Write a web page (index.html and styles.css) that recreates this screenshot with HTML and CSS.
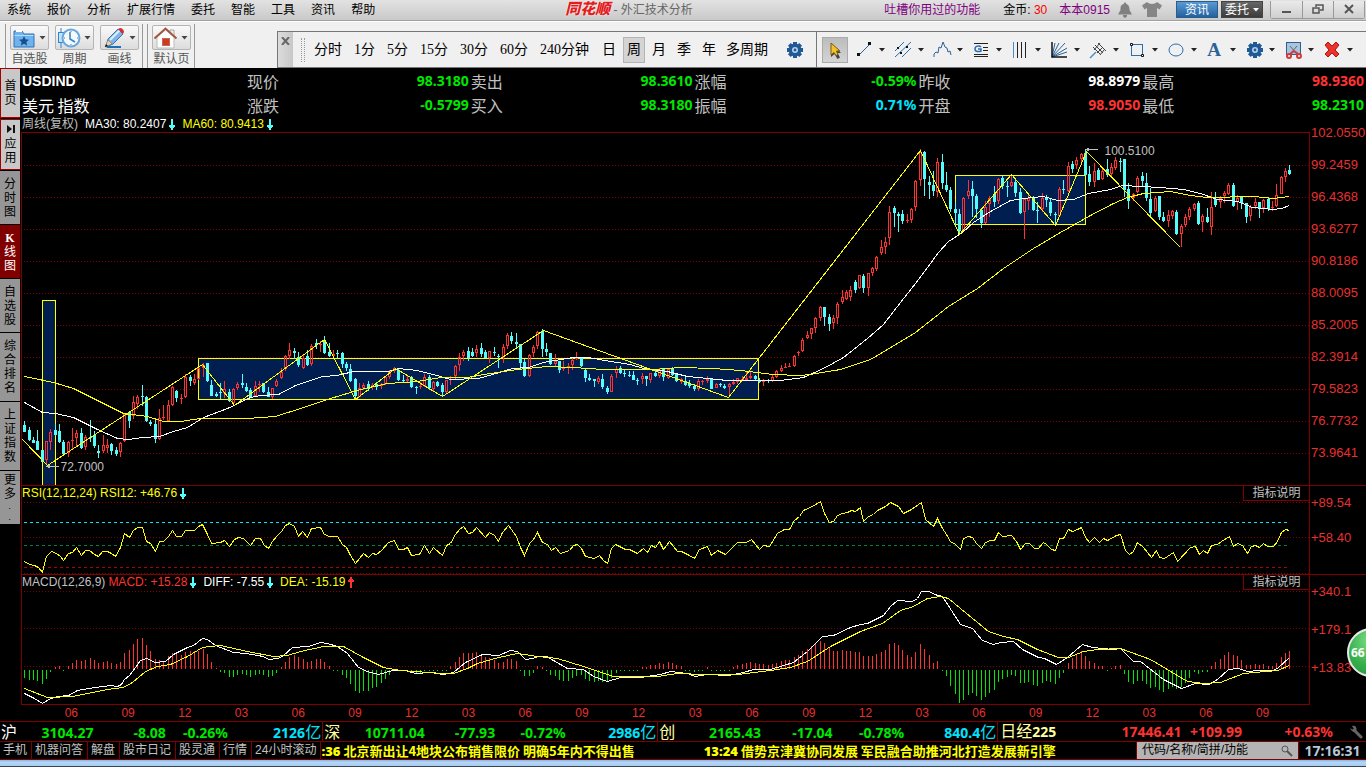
FILE: index.html
```
<!DOCTYPE html>
<html lang="zh-CN">

<head>
    <meta charset="UTF-8">
    <meta name="viewport" content="width=device-width, initial-scale=1.0">
    <title>同花顺 - 外汇技术分析</title>
    <link rel="stylesheet" href="styles.css">
</head>

<body>
    <!-- shared icon shapes -->
    <svg class="defs" width="0" height="0" aria-hidden="true">
        <symbol id="caret" viewBox="0 0 6 4"><path d="M0 0h6L3 3.6z" fill="currentColor" /></symbol>
        <symbol id="down" viewBox="0 0 6 11"><path d="M2 0h2v6h2v2H5v1H4v2H2V9H1V8H0V6h2z" fill="currentColor" /></symbol>
        <symbol id="up" viewBox="0 0 6 11"><path d="M2 11h2V5h2V3H5V2H4V0H2v2H1v1H0v2h2z" fill="currentColor" /></symbol>
        <symbol id="gear" viewBox="0 0 18 18">
            <g fill="#1f5a96">
                <circle cx="9" cy="9" r="6.4" />
                <path d="M7 1h4v16H7zM1 7h16v4H1z" />
                <path d="M7 1h4v16H7zM1 7h16v4H1z" transform="rotate(45 9 9)" />
            </g>
            <circle cx="9" cy="9" r="3" fill="#b9d2ea" />
            <circle cx="9" cy="9" r="1.4" fill="#1f5a96" />
        </symbol>
    </svg>

    <header class="titlebar">
        <nav class="menu">
            <a href="#">系统</a><a href="#">报价</a><a href="#">分析</a><a href="#">扩展行情</a><a href="#">委托</a><a href="#">智能</a><a href="#">工具</a><a href="#">资讯</a><a href="#">帮助</a>
        </nav>
        <div class="title"><span class="logo">同花顺</span> - 外汇技术分析</div>
        <div class="account">
            <a class="feedback" href="#">吐槽你用过的功能</a>
            <span class="coins">金币: <b>30</b></span>
            <a class="user" href="#">本本0915</a>
            <svg class="bell" viewBox="0 0 14 16" width="14" height="16">
                <path d="M7 0l1.500 2C11 3 11.500 5 11.500 8L14 12.500H0L2.500 8c0-3 0-5 3-6zM5 13h4v1.500L7 16l-2-1.500z" fill="#808080" />
            </svg>
            <svg class="shirt" viewBox="0 0 20 15" width="20" height="15">
                <path d="M5 0c2 2.500 8 2.500 10 0l5 3.500-2.500 4L15 6v9H5V6L2.500 7.500 0 3.500z" fill="#858585" />
            </svg>
        </div>
        <div class="quick">
            <button class="news-btn" type="button">资讯</button>
            <button class="trade-btn" type="button">委托<svg class="caret" width="6" height="4"><use href="#caret" /></svg></button>
        </div>
        <div class="window-btns">
            <button type="button" aria-label="最小化"><svg viewBox="0 0 12 10" width="12" height="10"><path d="M1 8h9" stroke="#555" stroke-width="2" /></svg></button>
            <button type="button" aria-label="还原"><svg viewBox="0 0 12 10" width="12" height="10"><path d="M4 3V1h7v5H8M1 4h6v5H1z" fill="none" stroke="#555" stroke-width="1.500" /></svg></button>
            <button type="button" aria-label="关闭"><svg viewBox="0 0 12 10" width="12" height="10"><path d="M2 1l8 8M10 1L2 9" stroke="#555" stroke-width="2" /></svg></button>
        </div>
    </header>

    <div class="toolbar">
        <div class="tool-group">
            <button class="big-tool" type="button">
                <span class="face"><svg viewBox="0 0 25 24" width="25" height="24">
                        <path d="M3 5h8l2 3h10v13H3z" fill="#6fb2ee" stroke="#2f74b8" />
                        <path d="M5 4h6v2H5z" fill="#fff" />
                        <path d="M3.500 9.500h19" stroke="#b5dafa" />
                        <path d="M13 10l1.500 3.300 3.500.4-2.600 2.400.7 3.400-3.100-1.700-3.100 1.700.7-3.400L8 13.700l3.500-.4z" fill="#174f8c" />
                    </svg><svg class="caret" width="7" height="4"><use href="#caret" /></svg></span>
                自选股
            </button>
            <button class="big-tool" type="button">
                <span class="face"><svg viewBox="0 0 25 24" width="25" height="24">
                        <path d="M5 2v20" stroke="#2f86d0" />
                        <rect x="2.500" y="6.500" width="5" height="10" fill="#bfe2ff" stroke="#2f86d0" />
                        <circle cx="15" cy="12" r="8.500" fill="#f2f9ff" stroke="#6ba6da" stroke-width="2" />
                        <path d="M14 6v7l5 3" fill="none" stroke="#3b80c0" stroke-width="1.500" />
                        <path d="M15 5v1M15 18v1M8 12h1M21 12h1" stroke="#3b80c0" />
                    </svg><svg class="caret" width="7" height="4"><use href="#caret" /></svg></span>
                周期
            </button>
            <button class="big-tool" type="button">
                <span class="face"><svg viewBox="0 0 25 24" width="25" height="24">
                        <path d="M6 21h14" stroke="#1c70b8" stroke-width="2" />
                        <path d="M7 13L17 3l5 5-10 10-7 3z" fill="#7db4e8" stroke="#4471a8" />
                        <path d="M9 14L18.500 4.500" stroke="#dcefff" stroke-width="2" />
                        <path d="M17 3l2-1c2 0 4 2 4 4l-1 2z" fill="#d92a35" />
                        <path d="M7 14l4 4-7 3z" fill="#f0d3ae" stroke="#665" stroke-width=".5" />
                        <path d="M4 21l1-3 2 2z" fill="#111" />
                    </svg><svg class="caret" width="7" height="4"><use href="#caret" /></svg></span>
                画线
            </button>
        </div>
        <div class="tool-group">
            <button class="big-tool" type="button">
                <span class="face"><svg viewBox="0 0 25 24" width="25" height="24">
                        <path d="M17 4h4v6h-4z" fill="#eee" stroke="#aaa" />
                        <path d="M4 11L12.500 4 21 11v11H4z" fill="#fff" stroke="#bbb" />
                        <path d="M1.500 12.500L12.500 2.500l11 10" fill="none" stroke="#a3573a" stroke-width="2" />
                        <rect x="9.500" y="12.500" width="7" height="7" fill="#d23a1e" stroke="#bd6a5c" />
                    </svg><svg class="caret" width="7" height="4"><use href="#caret" /></svg></span>
                默认页
            </button>
        </div>

        <div class="period-bar">
            <button class="close" type="button" aria-label="关闭工具条"><svg viewBox="0 0 9 8" width="9" height="8"><path d="M1 0l7 8M8 0L1 8" stroke="#666" stroke-width="2" /></svg></button>
            <span class="grip"></span>
            <button type="button">分时</button>
            <button type="button">1分</button>
            <button type="button">5分</button>
            <button type="button">15分</button>
            <button type="button">30分</button>
            <button type="button">60分</button>
            <button type="button">240分钟</button>
            <button class="single" type="button">日</button>
            <button class="single active" type="button">周</button>
            <button class="single" type="button">月</button>
            <button class="single" type="button">季</button>
            <button class="single" type="button">年</button>
            <button type="button">多周期</button>
            <button class="settings" type="button" aria-label="设置"><svg width="18" height="18"><use href="#gear" /></svg></button>
        </div>

        <div class="draw-bar">
            <button class="pointer" type="button" aria-label="选择">
                <svg viewBox="0 0 24 24" width="24" height="24">
                    <path d="M8 5v14l3.500-3 3 5 2.500-1.500-2.500-4.500H18z" fill="#111" opacity=".75" />
                    <path d="M8 5v12l3-2.500 2 3 2-1-1.500-3.500H17z" fill="#f2c22c" stroke="#7a5a10" />
                </svg>
            </button>
            <button class="draw" type="button" aria-label="线段"><svg viewBox="0 0 20 20" width="20" height="20"><path d="M4 15L15 4" stroke="#2b5f93" /><path d="M2 13h3v3H2zM13 2h3v3h-3z" fill="#111" /></svg><svg class="caret" width="6" height="4"><use href="#caret" /></svg></button>
            <button class="draw" type="button" aria-label="平行线"><svg viewBox="0 0 20 20" width="20" height="20"><path d="M1 11L10 2M1 17L17 2M8 17L17 8" stroke="#2b6db0" /><path d="M3 7h2v2H3zM6 12h2v2H6zM12 6h2v2h-2z" fill="#111" /></svg><svg class="caret" width="6" height="4"><use href="#caret" /></svg></button>
            <button class="draw" type="button" aria-label="波浪线"><svg viewBox="0 0 20 20" width="20" height="20"><path d="M1 17v-3l2-2 2 1 1-6 2 1 2-6 2 5 2 1 1 4 2-1 1 4" fill="none" stroke="#2b6296" /></svg><svg class="caret" width="6" height="4"><use href="#caret" /></svg></button>
            <button class="draw" type="button" aria-label="黄金分割"><svg viewBox="0 0 20 20" width="20" height="20"><path d="M2 3.500h14M2 14.500h14M2 16.500h14M11 7.500h5M11 10.500h5" stroke="#222" /><path d="M9 7C7 5 3 6 3 9s4 3 6 2V9H6" fill="none" stroke="#2b6db0" stroke-width="1.500" /></svg><svg class="caret" width="6" height="4"><use href="#caret" /></svg></button>
            <button class="draw" type="button" aria-label="周期线"><svg viewBox="0 0 20 20" width="20" height="20"><path d="M6.500 2v16M10.500 2v16M14.500 2v16" stroke="#222" /><path d="M2.500 2v16" stroke="#4a8bc8" /></svg><svg class="caret" width="6" height="4"><use href="#caret" /></svg></button>
            <button class="draw" type="button" aria-label="扇形线"><svg viewBox="0 0 20 20" width="20" height="20"><path d="M2 17L5 3M2 17L9 3M2 17L15 3M2 17l15-9M2 17l15-5" stroke="#2b6296" /><path d="M2 2v15h15" fill="none" stroke="#111" stroke-width="1.500" /></svg><svg class="caret" width="6" height="4"><use href="#caret" /></svg></button>
            <button class="draw" type="button" aria-label="叉线"><svg viewBox="0 0 20 20" width="20" height="20"><path d="M1 18l6-6" stroke="#4a8bc8" stroke-width="1.500" /><path d="M4 7l8 8M6 5l8 8M9 3l8 8M5 10l6-7M8 13l6-6M11 15l4-5" stroke="#444" /></svg><svg class="caret" width="6" height="4"><use href="#caret" /></svg></button>
            <button class="draw" type="button" aria-label="矩形"><svg viewBox="0 0 20 20" width="20" height="20"><rect x="3.500" y="4.500" width="11" height="11" fill="none" stroke="#2b6db0" /><path d="M2.500 3.500h2v2h-2zM13.500 14.500h2v2h-2z" fill="#fff" stroke="#111" /></svg><svg class="caret" width="6" height="4"><use href="#caret" /></svg></button>
            <button class="draw" type="button" aria-label="椭圆"><svg viewBox="0 0 20 20" width="20" height="20"><ellipse cx="9" cy="10" rx="7" ry="6" fill="none" stroke="#2b6db0" /></svg><svg class="caret" width="6" height="4"><use href="#caret" /></svg></button>
            <button class="draw letter" type="button" aria-label="文字"><span>A</span><svg class="caret" width="6" height="4"><use href="#caret" /></svg></button>
            <button class="draw" type="button" aria-label="画线设置"><svg width="20" height="18"><use href="#gear" /></svg><svg class="caret" width="6" height="4"><use href="#caret" /></svg></button>
            <button class="draw" type="button" aria-label="截图"><svg viewBox="0 0 20 20" width="20" height="20"><rect x="2.500" y="2.500" width="14" height="12" fill="#a9c4dc" stroke="#2b5f93" /><path d="M6 6l6 7M13 6l-6 7" stroke="#666" /><path d="M10 11l-4 3M10 11l4 3" stroke="#d03b3b" stroke-width="2" /><circle cx="5" cy="16" r="2" fill="none" stroke="#d03b3b" stroke-width="2" /><circle cx="15" cy="16" r="2" fill="none" stroke="#d03b3b" stroke-width="2" /></svg><svg class="caret" width="6" height="4"><use href="#caret" /></svg></button>
            <button class="draw" type="button" aria-label="删除"><svg viewBox="0 0 20 20" width="20" height="20"><path d="M2 5l3-3 4 4 4-4 3 3-4 5 4 4-3 3-4-4-4 4-3-3 4-4z" fill="#e8342c" stroke="#b01510" /></svg><svg class="caret" width="6" height="4"><use href="#caret" /></svg></button>
        </div>
    </div>

    <main class="workspace">
        <nav class="side-tabs">
            <button class="light home" type="button">首页</button>
            <button class="light apps" type="button"><svg viewBox="0 0 8 8" width="8" height="8"><path d="M0 0l5 4-5 4zM6 0h2v8H6z" fill="#111" /></svg>应用</button>
            <button type="button">分时图</button>
            <button class="active" type="button"><b>K</b>线图</button>
            <button type="button">自选股</button>
            <button class="tall" type="button">综合排名</button>
            <button class="tall" type="button">上证指数</button>
            <button class="more" type="button">更多<i>.</i><i>.</i></button>
        </nav>

        <section class="content">
            <table class="quote">
                <tr>
                    <th class="name code" scope="row">USDIND</th>
                    <th>现价</th><td class="down">98.3180</td>
                    <th>卖出</th><td class="down">98.3610</td>
                    <th>涨幅</th><td class="down">-0.59%</td>
                    <th>昨收</th><td>98.8979</td>
                    <th>最高</th><td class="up">98.9360</td>
                </tr>
                <tr>
                    <th class="name" scope="row">美元 指数</th>
                    <th>涨跌</th><td class="down">-0.5799</td>
                    <th>买入</th><td class="down">98.3180</td>
                    <th>振幅</th><td class="vol">0.71%</td>
                    <th>开盘</th><td class="up">98.9050</td>
                    <th>最低</th><td class="down">98.2310</td>
                </tr>
            </table>

            <div class="legend">
                <span class="grey">周线(复权)</span>
                <span>MA30: 80.2407<svg width="6" height="11"><use href="#down" /></svg></span>
                <span class="yellow">MA60: 80.9413<svg width="6" height="11"><use href="#down" /></svg></span>
            </div>

            <div class="panel price">
                <div class="plot">
                    <svg id="price-chart" viewBox="22 133 1287 352" preserveAspectRatio="none"></svg>
                    <span class="mark low">72.7000</span>
                    <span class="mark high">100.5100</span>
                </div>
                <ol class="axis">
                    <li>102.0550</li><li>99.2459</li><li>96.4368</li><li>93.6277</li><li>90.8186</li><li>88.0095</li><li>85.2005</li><li>82.3914</li><li>79.5823</li><li>76.7732</li><li>73.9641</li>
                </ol>
            </div>

            <div class="panel rsi">
                <div class="plot">
                    <svg id="rsi-chart" viewBox="22 486 1287 88" preserveAspectRatio="none"></svg>
                    <div class="legend over yellow"><span>RSI(12,12,24) RSI12: +46.76<svg width="6" height="11"><use href="#down" /></svg></span></div>
                    <button class="help" type="button">指标说明</button>
                </div>
                <ol class="axis">
                    <li>+89.54</li><li>+58.40</li>
                </ol>
            </div>

            <div class="panel macd">
                <div class="plot">
                    <svg id="macd-chart" viewBox="22 575 1287 129" preserveAspectRatio="none"></svg>
                    <div class="legend over">
                        <span><span class="grey">MACD(12,26,9)</span> <span class="red">MACD: +15.28</span><svg width="6" height="11"><use href="#down" /></svg></span>
                        <span>DIFF: -7.55<svg width="6" height="11"><use href="#down" /></svg></span>
                        <span class="yellow">DEA: -15.19<svg class="red" width="6" height="11"><use href="#up" /></svg></span>
                    </div>
                    <button class="help" type="button">指标说明</button>
                </div>
                <ol class="axis">
                    <li>+340.1</li><li>+179.1</li><li>+13.83</li>
                </ol>
            </div>

            <ol class="months">
                <li>06</li><li>09</li><li>12</li><li>03</li><li>06</li><li>09</li><li>12</li><li>03</li><li>06</li><li>09</li><li>12</li><li>03</li><li>06</li><li>09</li><li>12</li><li>03</li><li>06</li><li>09</li><li>12</li><li>03</li><li>06</li><li>09</li>
            </ol>
        </section>
    </main>

    <div class="indices">
        <div class="index"><span class="white">沪</span><b>3104.27</b><b>-8.08</b><b>-0.26%</b><b class="vol">2126<i>亿</i></b></div>
        <div class="index"><span>深</span><b>10711.04</b><b>-77.93</b><b>-0.72%</b><b class="vol">2986<i>亿</i></b></div>
        <div class="index"><span>创</span><b>2165.43</b><b>-17.04</b><b>-0.78%</b><b class="vol">840.4<i>亿</i></b></div>
        <div class="index nikkei"><span>日经<b>225</b></span><b class="up">17446.41</b><b class="up">+109.99</b><b class="up">+0.63%</b>
            <svg viewBox="0 0 14 14" width="14" height="14"><path d="M5 5l7 7" stroke="#666" stroke-width="3" stroke-linecap="round" /><path d="M1 3l3 2 1-1-2-3c3-1 5 1 4.500 4S3 8 1 3z" fill="#666" /></svg>
        </div>
    </div>

    <footer class="ticker">
        <nav>
            <a href="#">手机</a><a href="#">机器问答</a><a href="#">解盘</a><a href="#">股市日记</a><a href="#">股灵通</a><a href="#">行情</a><a href="#">24小时滚动</a>
        </nav>
        <div class="news">
            <span><b>:36</b> 北京新出让4地块公布销售限价 明确5年内不得出售</span>
            <span><b>13:24</b> 借势京津冀协同发展 军民融合助推河北打造发展新引擎</span>
        </div>
        <label class="search">
            <input type="text" placeholder="代码/名称/简拼/功能" aria-label="代码/名称/简拼/功能">
            <svg viewBox="0 0 12 12" width="12" height="12"><circle cx="4" cy="4" r="3" fill="none" stroke="#555" /><path d="M6 6l5 5" stroke="#555" stroke-width="2" /></svg>
        </label>
        <time>17:16:31</time>
    </footer>
    <div class="taskbar"></div>

    <div class="ball">66</div>

    <script src="script.js"></script>
</body>

</html>
```
FILE: styles.css
```
* {
    box-sizing: border-box;
}

html,
body {
    height: 100%;
}

body {
    margin: 0;
    display: flex;
    flex-direction: column;
    position: relative;
    overflow: hidden;
    background: #000;
    color: #fff;
    font: 12px/14px "Liberation Sans", "Noto Sans CJK SC", sans-serif;
}

button {
    margin: 0;
    padding: 0;
    border: 0;
    background: none;
    color: inherit;
    font: inherit;
}

a {
    color: inherit;
    text-decoration: none;
}

svg {
    display: block;
    flex: none;
}

ol {
    margin: 0;
    padding: 0;
    list-style: none;
}

.defs {
    position: absolute;
}

.up,
.red {
    color: #ff3232;
}

.down {
    color: #00e600;
}

.vol {
    color: #00e5ff;
}

.yellow {
    color: #ff0;
}

.grey {
    color: #c0c0c0;
}

/* title bar */
.titlebar {
    flex: none;
    display: flex;
    align-items: center;
    height: 22px;
    padding-bottom: 2px;
    background: linear-gradient(#e2e2e2, #c8c8c8);
    border-bottom: 1px solid #fff;
    box-shadow: inset 0 -1px #a0a0a0;
    color: #000;
    white-space: nowrap;
}

.menu {
    display: flex;
    gap: 16px;
    padding-left: 7px;
}

.title {
    margin-left: 190px;
    color: #666;
}

.logo {
    color: #e02020;
    font-size: 15px;
    font-weight: 900;
    font-style: italic;
    text-shadow: 0 0 1px #fff, 0 0 2px #fff;
}

.account {
    display: flex;
    align-items: center;
    margin-left: auto;
}

.feedback,
.user {
    color: #800080;
}

.coins {
    margin: 0 12px 0 23px;
}

.coins b {
    color: #f00;
    font-weight: normal;
}

.bell {
    margin: 0 10px 0 8px;
}

.quick {
    display: flex;
    gap: 3px;
    margin: 0 7px 0 14px;
    color: #fff;
}

.quick button {
    display: flex;
    align-items: center;
    justify-content: center;
    gap: 4px;
    width: 42px;
    height: 17px;
    border: 1px solid #444;
}

.quick .news-btn {
    background: linear-gradient(#5a9ad4, #22619e);
    border-color: #2a5c8c;
}

.quick .trade-btn {
    background: linear-gradient(#666, #3c3c3c);
}

.window-btns {
    display: flex;
    margin-right: 1px;
    border: 1px solid #999;
    border-top: 0;
    border-radius: 0 0 3px 3px;
}

.window-btns button {
    display: flex;
    align-items: center;
    justify-content: center;
    width: 31px;
    height: 17px;
    background: linear-gradient(#eaeaea, #cfcfcf);
}

.window-btns button + button {
    border-left: 1px solid #999;
}

/* toolbar */
.toolbar {
    flex: none;
    display: flex;
    align-items: flex-end;
    height: 46px;
    background: #f0f0f0;
    color: #000;
}

.tool-group {
    display: flex;
    gap: 6px;
    height: 44px;
    padding: 1px 3px 0 4px;
    margin-left: 5px;
    border-left: 1px solid #999;
    border-right: 1px solid #999;
}

.tool-group + .tool-group {
    margin-left: 4px;
}

.big-tool {
    width: 39px;
    color: #555;
    line-height: 18px;
    white-space: nowrap;
}

.face {
    display: flex;
    align-items: center;
    height: 25px;
    border: 1px solid #b4b4b4;
    border-radius: 2px;
    background: linear-gradient(#fafafa, #dcdcdc);
}

.face .caret {
    margin-left: 3px;
    color: #444;
}

.period-bar,
.draw-bar {
    display: flex;
    align-items: center;
    height: 37px;
    border: 1px solid #777;
}

.period-bar {
    margin-left: 82px;
    width: 540px;
    font: 14px/20px "Liberation Serif", "Noto Sans CJK SC", sans-serif;
    white-space: nowrap;
}

.period-bar button {
    padding: 0 6px;
}

.period-bar .close {
    display: flex;
    align-self: stretch;
    width: 15px;
    padding: 5px 3px;
    background: linear-gradient(90deg, #dcdcdc, #c8c8c8);
}

.grip {
    width: 4px;
    height: 24px;
    margin: 0 3px 0 8px;
    border: dotted #999;
    border-width: 0 1px;
}

.period-bar .single {
    padding: 0 4px;
    margin-left: 3px;
}

.period-bar .active {
    height: 26px;
    padding: 0 3px;
    background: #d4d4d4;
    border: 1px solid #b4b4b4;
}

.period-bar .settings {
    margin-left: auto;
    padding: 0 12px 0 6px;
}

.draw-bar {
    flex: 1;
    padding-left: 5px;
    border-left: 0;
    border-right: 0;
}

.pointer {
    margin-right: 3px;
    background: linear-gradient(#bcbcbc, #d4d4d4);
    border: 1px solid #aaa;
}

.draw {
    display: flex;
    align-items: center;
    gap: 4px;
    width: 39px;
    padding-left: 4px;
}

.draw .caret {
    color: #222;
}

.letter span {
    width: 20px;
    padding-right: 4px;
    color: #2b6296;
    font: bold 19px/20px "Liberation Serif", serif;
}

/* side tabs */
.workspace {
    flex: 1;
    display: flex;
    min-height: 0;
}

.side-tabs {
    flex: none;
    width: 21px;
    padding-right: 1px;
    display: flex;
    flex-direction: column;
    gap: 1px;
}

.side-tabs button {
    display: flex;
    flex-direction: column;
    align-items: center;
    justify-content: center;
    height: 53px;
    width: 20px;
    padding: 0 4px;
    background: #969696;
    color: #000;
    word-break: break-all;
    white-space: normal;
}

.side-tabs .light {
    gap: 4px;
    background: #c8c8c8;
    border: solid #a00000;
    border-width: 1px 0 1px 1px;
}

.side-tabs .home {
    height: 50px;
}

.side-tabs .apps {
    height: 51px;
}

.side-tabs .active {
    background: #800000;
    color: #fff;
}

.side-tabs .active b {
    font-family: "Liberation Serif", serif;
}

.side-tabs .tall {
    height: 68px;
}

.more i {
    font-size: 9px;
    line-height: 11px;
}

/* quote board */
.content {
    flex: 1;
    display: flex;
    flex-direction: column;
    min-width: 0;
}

.quote {
    flex: none;
    width: 100%;
    padding: 1px 2px 0 0;
    table-layout: fixed;
    border-spacing: 0;
    font: bold 14px/24px "Noto Sans", sans-serif;
}

.quote th,
.quote td {
    height: 24px;
    padding: 0;
    white-space: nowrap;
}

.quote th {
    width: 35px;
    padding-left: 2px;
    color: #c0c0c0;
    font: 16px/24px "Noto Sans CJK SC", sans-serif;
    text-align: left;
}

.quote td {
    text-align: right;
}

.quote .name {
    width: 224px;
    padding-left: 1px;
    color: #fff;
}

.quote .code {
    font: bold 14px/24px "Liberation Sans", sans-serif;
}

.legend {
    flex: none;
    display: flex;
    gap: 7px;
    height: 15px;
    padding-left: 1px;
    line-height: 15px;
    white-space: nowrap;
}

.legend > span {
    display: flex;
    gap: 3px;
    align-items: center;
}

.legend svg {
    color: #54fcfc;
}

.legend svg.red {
    color: #ff3232;
}

.over {
    position: absolute;
    top: 0;
    left: -1px;
}

/* chart panels */
.panel {
    display: flex;
    min-height: 0;
    border-top: 1px solid #800000;
}

.price {
    flex: 353 1 353px;
    border-top: 0;
}

.rsi {
    flex: 89 1 89px;
}

.macd {
    flex: 131 1 131px;
}

.plot {
    flex: 1;
    position: relative;
    min-width: 0;
    border: 0 solid #800000;
    border-width: 0 1px;
}

.price .plot {
    border-top-width: 1px;
}

.macd .plot {
    border-bottom-width: 1px;
}

.plot > svg {
    width: 100%;
    height: 100%;
    shape-rendering: crispEdges;
}

.mark {
    position: absolute;
    color: #c0c0c0;
}

.low {
    left: 3%;
    bottom: 3%;
}

.high {
    right: 12%;
    top: 3%;
}

.help {
    position: absolute;
    top: 0;
    right: 0;
    width: 66px;
    height: 15px;
    border: solid #800000;
    border-width: 0 0 1px 1px;
    color: #c0c0c0;
}

.axis {
    flex: none;
    width: 56px;
    padding-left: 1px;
    display: flex;
    flex-direction: column;
    color: #e63030;
    font-size: 13px;
}

.price .axis {
    margin: -15px 0 16px;
}

.price li {
    flex: 1;
    display: flex;
    align-items: center;
}

.rsi .axis {
    padding-top: 10px;
    gap: 21px;
}

.macd .axis {
    padding-top: 10px;
    gap: 24px;
}

.months {
    flex: none;
    display: grid;
    grid-template-columns: repeat(22, 1fr);
    height: 16px;
    padding: 0 75px 0 22px;
    color: #e63030;
    line-height: 17px;
    text-align: center;
}

/* index strip */
.indices {
    flex: none;
    display: flex;
    height: 20px;
    border-top: 1px solid #800000;
    color: #00e600;
    font: 14px/19px "Noto Sans", "Noto Sans CJK SC", sans-serif;
}

.index {
    flex: 335;
    display: grid;
    grid-template-columns: 20px 8fr 7fr 7fr 9fr;
    align-items: center;
    padding: 0 1px;
    border-right: 1px solid #800000;
    text-align: right;
    white-space: nowrap;
}

.index:first-child {
    flex: 323;
    grid-template-columns: 20px 7fr 7fr 6fr 9fr;
}

.index:nth-child(3) {
    flex: 340;
}

.index span {
    color: #ffffa0;
    font-size: 16px;
    text-align: left;
}

.index span b {
    font-size: 14px;
}

.index .white {
    color: #fff;
}

.index .vol {
    color: #00e5ff;
}

.index .up {
    color: #ff3232;
}

.index i {
    font: 16px/19px "Noto Sans CJK SC", sans-serif;
}

.nikkei {
    flex: 368;
    grid-template-columns: 60px 12fr 6fr 9fr 32px;
    padding-left: 2px;
    border-right: 0;
}

.nikkei svg {
    justify-self: end;
    margin-right: 2px;
}

/* ticker */
.ticker {
    flex: none;
    display: flex;
    height: 19px;
    border: solid #800000;
    border-width: 1px 0;
    line-height: 17px;
    white-space: nowrap;
}

.ticker nav {
    display: flex;
    color: #c0c0c0;
}

.ticker nav a {
    padding: 0 4px 0 3px;
    border-right: 1px solid #800000;
}

.news {
    flex: 1;
    display: flex;
    gap: 69px;
    overflow: hidden;
    color: #ff0;
    font: bold 13px/17px "Noto Sans CJK SC", sans-serif;
}

.news b {
    font-family: "Noto Sans", sans-serif;
}

.search {
    display: flex;
    align-items: center;
    width: 163px;
    padding: 0 5px;
    background: #b4b4b4;
    border: solid #800000;
    border-width: 0 1px;
}

.search input {
    flex: 1;
    min-width: 0;
    padding: 0;
    border: 0;
    background: none;
    font: inherit;
}

.search input::placeholder {
    color: #000;
    opacity: 1;
}

.ticker time {
    width: 67px;
    color: #b8c8d8;
    font: bold 14px/17px "Noto Sans", sans-serif;
    text-align: center;
}

.taskbar {
    flex: none;
    height: 7px;
    background: linear-gradient(#8fb4dc, #b4d6f8 40%, #a8ccf0);
    border-bottom: 1px solid #345;
}

/* floating speed ball */
.ball {
    position: absolute;
    right: -30px;
    bottom: 90px;
    width: 49px;
    height: 49px;
    padding-left: 2px;
    border: 2px solid #e8e8e8;
    border-radius: 50%;
    background: radial-gradient(circle at 50% 25%, #7fe08a, #35b04a 60%, #2a9440);
    font: bold 12px/45px "Noto Sans", sans-serif;
}
```
FILE: script.js
```
// Each candle: direction, high, body top, body bottom, low (r = up, c = down)
const CANDLES = `
c421 425 432 432,c427 430 440 441,c437 440 443 443,c430 441 450 450,c450 450 462 462,r441 441 460 465,r429 432 442 450,c424 430 435 436,
c424 431 442 443,c440 442 454 455,r441 442 453 457,r428 440 440 450,r430 433 438 447,c428 433 448 449,r435 437 447 450,c420 437 438 442,
c431 435 446 448,c445 451 453 458,r435 445 451 453,r439 445 448 453,c443 444 451 455,c447 450 454 456,r442 443 452 457,r414 414 441 442,
c411 412 421 428,r396 402 416 419,r395 397 404 409,c385 396 397 406,c396 397 421 422,c420 422 424 426,c420 424 439 443,r409 418 439 440,
r405 417 418 420,r400 405 421 421,r386 387 405 406,c390 391 398 402,r394 398 399 404,r374 377 397 398,c375 377 381 386,r374 379 383 385,
r367 368 379 380,r363 365 368 377,c363 363 381 382,c380 385 396 396,c392 394 396 397,c383 392 393 399,r381 389 393 398,c389 392 401 402,
r388 389 403 404,r382 384 388 390,c374 383 385 388,c383 387 391 392,c388 390 397 397,r381 386 396 397,r381 384 385 392,c383 383 392 393,
c387 392 397 397,r388 388 397 399,r379 381 386 387,r368 372 378 379,r355 356 369 371,r343 350 356 359,c348 351 353 359,c352 357 365 367,
r355 358 368 369,c350 356 365 366,r344 346 364 366,c339 343 345 349,r341 344 345 352,c336 340 353 354,c343 352 356 357,r350 354 356 358,
c350 353 354 358,c352 353 364 368,c362 364 368 371,c364 369 381 382,c378 379 396 398,r383 388 397 397,r383 385 388 390,c381 384 389 391,
r383 385 387 390,c382 384 387 390,r383 384 386 389,r376 377 384 385,r370 371 377 379,r367 368 371 373,c368 370 380 381,c375 380 381 383,
r375 379 381 382,c376 377 387 388,c386 387 388 394,r382 386 387 389,r374 377 386 387,c375 377 388 390,r381 382 389 391,c381 382 386 387,
c383 385 392 396,r380 380 392 393,r376 379 380 385,r365 366 376 379,r353 357 365 371,r350 352 356 361,c347 351 358 361,c348 352 356 357,
r345 349 353 357,c343 348 354 357,c350 352 358 358,r351 351 358 363,c347 352 353 356,c354 356 357 368,r344 347 357 363,r333 335 346 349,
c332 336 341 344,c333 342 344 348,c344 344 363 369,c359 362 376 377,r354 355 376 377,r345 347 353 357,r331 332 346 349,c329 331 349 357,
c343 349 352 356,c353 353 364 365,r354 361 364 367,c361 361 370 373,r361 368 369 371,r363 366 367 374,r358 360 365 370,r352 358 359 360,
c357 357 366 367,c368 370 378 382,c374 378 380 381,c379 379 381 387,r376 378 382 384,c374 379 387 389,c386 388 392 394,r374 376 392 392,
r366 369 373 378,c366 368 373 374,c369 373 374 377,c371 375 376 377,c371 375 380 380,c378 380 381 385,r373 376 379 384,c376 376 379 386,
r373 373 380 383,c369 373 376 377,r368 370 376 378,c368 368 377 381,r368 369 378 379,c367 368 375 376,c373 374 381 382,r378 379 382 384,
c376 381 385 386,c380 384 386 388,c384 386 389 391,r379 381 389 391,r380 381 382 385,r376 379 381 383,c378 378 389 389,r383 384 388 388,
c383 384 385 387,c384 386 388 389,r383 384 387 396,r379 382 384 385,r378 378 382 384,r376 379 380 381,r371 378 380 381,r372 376 378 379,
c375 376 379 380,c378 380 382 383,r379 381 382 386,c379 380 381 383,r375 377 381 382,r370 371 377 378,r365 368 371 372,r363 367 368 368,
r363 366 367 367,r355 356 366 367,r351 352 353 356,r338 340 351 352,r331 335 338 339,r328 328 334 339,r317 318 328 333,r306 307 318 321,
c307 307 317 326,c314 317 324 331,r315 318 323 329,r302 304 318 324,r290 297 302 304,r290 292 299 300,r286 290 297 301,c280 282 290 293,
r275 275 288 289,c274 276 288 293,r273 273 288 296,r267 268 273 276,r256 257 269 271,r240 247 253 255,r237 242 247 254,r206 212 238 245,
c206 208 213 227,c212 214 216 232,c210 214 221 224,r214 220 221 223,r208 209 220 223,r180 181 207 211,r149 152 180 186,c151 152 179 196,
c176 182 185 199,c171 185 191 196,r158 162 192 197,c154 162 183 189,c172 185 190 192,c187 190 209 212,c202 209 213 227,c209 214 231 233,
r197 198 231 232,r180 191 196 199,c181 189 196 217,c194 196 209 218,c208 210 223 228,r201 207 223 224,r196 198 204 217,c186 194 202 207,
r178 179 201 204,c176 178 186 189,c181 186 187 197,r176 182 186 187,c179 182 193 197,c188 192 213 214,r198 199 212 239,r193 198 201 210,
c196 198 210 211,c202 210 211 223,r193 198 209 212,c195 198 200 207,c198 202 213 216,c212 214 215 226,r187 189 216 217,c180 189 190 194,
r162 166 191 192,c161 164 169 173,r157 160 165 169,r153 154 159 162,c149 153 175 176,c166 174 182 186,r163 171 182 187,c168 170 180 180,
r168 171 179 180,c159 169 175 177,r163 167 174 176,r157 160 168 170,c158 161 162 172,c159 159 190 197,c183 189 201 209,r193 194 198 201,
r176 178 192 193,c172 176 181 187,c173 183 198 201,c188 199 213 217,r196 198 211 212,c196 196 217 220,c212 217 221 222,r210 215 221 227,
r210 211 216 219,c210 212 234 235,r224 226 234 247,r214 217 225 227,r207 209 217 220,r203 204 209 211,c201 203 224 225,r214 216 222 232,
c208 217 222 223,r192 207 227 235,c192 199 205 207,r196 198 202 208,r191 193 196 203,r183 185 194 195,c183 185 206 207,r195 198 202 210,
c196 197 203 209,c203 203 217 223,r205 207 216 221,r198 202 206 209,c202 202 208 218,r199 200 208 213,c198 199 209 211,r201 207 208 211,
r184 195 206 207,r176 177 194 194,r168 171 177 182,c165 170 174 175`;

const MA30 = '24,402 42,412 55,413 73,417 97,429 117,438 128,439 142,437 159,436 173,431 187,427 203,417 227,408 250,397 260,395 278,394 295,385 322,376 337,375 353,371 388,371 398,368 417,370 440,376 450,379 478,378 492,374 512,368 528,367 543,362 573,357 588,357 610,361 630,364 643,368 667,371 687,376 727,380 780,380 803,377 823,368 843,357 867,338 883,324 900,302 915,283 927,267 938,252 948,241 962,232 973,222 990,211 1010,200 1023,198 1043,196 1057,200 1073,199 1088,193 1110,189 1122,185 1160,187 1183,189 1200,193 1217,199 1237,201 1252,207 1273,209 1281,208 1289,205';
const MA60 = '24,376 53,382 73,388 97,400 123,413 147,416 163,421 180,421 200,418 247,418 275,416 300,408 330,398 360,389 387,383 417,381 440,377 467,377 483,374 517,369 547,366 573,367 603,369 653,369 680,367 713,368 740,370 773,374 800,375 810,374 840,369 870,359 887,349 915,332 948,306 977,288 1003,268 1033,248 1060,232 1090,215 1113,203 1127,197 1143,193 1170,191 1190,195 1207,197 1253,196 1273,198 1289,196';
const ZIGZAG = '22,439 47,465 202,364 234,405 324,339 355,399 395,368 442,396 543,330 728,397 920,150 959,234 1011,174 1055,225 1086,151 1180,247';

const RSI = '24,561 29,564 34,565 38,567 42,572 46,556 51,551 56,553 60,556 63,560 68,553 72,552 76,547 81,555 85,550 89,550 94,554 98,556 102,551 107,551 111,553 115,556 120,547 124,533 129,537 133,530 137,527 142,527 146,541 150,543 155,551 159,541 163,541 168,536 172,530 176,536 181,536 185,530 194,530 198,526 202,524 207,534 211,543 220,542 224,540 229,546 234,539 238,537 243,538 250,545 255,538 260,538 264,545 268,548 272,541 276,536 281,531 285,525 289,523 294,526 298,536 302,531 307,537 311,528 320,527 324,534 329,536 337,536 342,544 346,547 350,555 355,563 363,553 368,557 372,553 376,554 381,550 388,542 394,540 398,549 403,549 407,547 411,555 419,554 424,545 429,553 433,547 442,555 446,545 450,543 455,534 459,529 463,526 468,533 472,532 476,527 485,537 489,532 494,535 498,541 502,532 508,525 516,536 520,547 524,555 529,543 533,539 537,532 542,542 547,544 551,550 555,547 560,553 569,550 573,545 577,544 581,548 585,556 594,558 599,555 603,560 607,563 611,548 615,544 625,549 629,549 637,553 643,548 647,552 651,545 655,547 659,541 663,549 669,541 677,551 681,551 687,554 694,558 699,549 707,546 711,555 717,550 725,554 737,542 746,542 751,539 759,549 763,545 769,546 777,533 784,529 789,529 794,520 799,516 803,510 812,506 820,501 824,513 829,522 833,521 837,515 842,513 847,512 851,510 855,511 860,507 863,521 868,516 873,514 877,510 885,506 890,502 898,506 903,513 911,509 921,502 925,519 933,526 937,518 942,528 946,534 950,541 955,544 960,549 963,538 968,536 972,537 976,543 981,548 985,542 990,540 994,540 998,532 1002,536 1011,535 1016,541 1020,549 1025,543 1029,543 1034,548 1038,548 1043,542 1046,544 1051,549 1055,550 1059,538 1063,538 1068,529 1072,531 1077,529 1081,527 1085,537 1089,542 1094,537 1099,542 1103,538 1107,540 1116,535 1120,534 1125,550 1129,554 1133,551 1137,542 1143,547 1151,557 1156,550 1159,557 1164,558 1173,552 1177,561 1190,547 1195,546 1199,554 1203,550 1207,553 1211,545 1217,544 1221,541 1229,536 1233,546 1237,543 1242,545 1247,553 1251,546 1255,545 1259,547 1263,543 1267,546 1273,546 1277,541 1281,532 1285,529 1289,530';

const MACD = [-8, -10, -10, -11, -14, -9, -2, 2, 3, -1, 3, 6, 9, 8, 9, 11, 9, 6, 7, 8, 6, 5, 7, 16, 19, 25, 30, 31, 24, 18, 10, 9, 7, 13, 16, 16, 14, 17, 18, 18, 18, 20, 15, 7, 1, -2, -3, -7, -7, -5, -4, -5, -7, -5, -4, -5, -7, -6, -3, 2, 7, 12, 14, 12, 10, 7, 8, 10, 10, 7, 3, -1, -1, -5, -8, -14, -21, -23, -21, -21, -18, -17, -13, -9, -5, -1, -1, -1, -1, -2, -3, -3, -1, -1, -1, -1, -1, -1, 3, 7, 12,
    16, 16, 16, 17, 14, 12, 11, 9, 6, 7, 10, 10, 8, -1, -6, -6, -3, 3, 2, -1, -5, -6, -10, -11, -11, -8, -6, -5, -9, -11, -12, -11, -12, -12, -8, -3, -1, -1, -1, -1, -1, 2, 2, 4, 4, 6, 5, 7, 6, 4, 3, -1, -1, -2, -1, -1, 2, -1, -1, -1, -1, -1, 2, 4, 5, 6, 7, 6, 5, 5, 4, 5, 6, 8, 9, 9, 12, 14, 18, 20, 23, 25, 28, 26, 21, 18, 18, 19, 18, 18, 17, 17, 13, 13, 13, 15, 17, 19, 25, 26, 24, 19, 14, 12, 17, 25, 20, 14, 6, 8,
    -1, -6, -16, -24, -33, -30, -25, -23, -26, -30, -27, -23, -20, -12, -9, -7, -5, -6, -13, -13, -12, -15, -16, -13, -11, -12, -14, -8, -3, 6, 11, 15, 18, 13, 8, 6, 3, 3, -1, 1, 3, 4, -4, -12, -14, -11, -11, -14, -18, -17, -20, -22, -19, -17, -19, -17, -13, -8, -2, -4, -2, -2, 3, 7, 10, 14, 17, 14, 13, 9, 4, 4, 5, 4, 5, 3, 3, 6, 12, 16, 18];
const DIFF = '24,693 34,698 42,703 50,698 58,696 68,695 77,690 88,688 110,685 117,686 121,684 124,679 129,675 135,667 140,660 146,658 155,662 165,661 173,654 187,647 193,645 202,638 207,639 215,645 233,652 245,653 263,656 268,659 277,658 282,656 292,647 308,646 320,642 327,643 337,646 347,653 358,667 367,671 378,674 392,670 405,670 415,673 430,672 443,674 453,672 465,662 482,654 498,655 510,650 517,651 525,659 532,658 538,656 546,656 567,668 583,669 593,676 607,681 620,677 640,677 660,674 670,671 687,673 695,676 707,674 728,675 743,672 753,669 770,669 793,662 807,651 822,636 833,635 850,627 860,624 867,623 883,615 890,606 897,600 912,601 917,598 921,591 929,591 934,594 942,596 960,624 972,628 982,640 993,644 1000,642 1013,641 1022,649 1038,657 1044,658 1056,664 1067,657 1082,644 1092,647 1113,649 1120,648 1133,661 1140,661 1163,679 1181,688 1195,683 1208,684 1217,679 1228,669 1238,668 1247,671 1258,670 1273,670 1278,667 1289,657';
const DEA = '24,688 47,697 72,696 107,689 123,687 132,682 145,671 157,666 170,664 187,656 202,647 210,646 220,645 247,651 273,656 287,655 300,651 323,646 343,646 363,657 383,667 400,670 443,673 453,673 467,668 477,663 498,657 517,653 537,656 557,658 583,666 613,676 657,676 677,673 703,674 737,674 770,670 790,667 807,661 830,646 860,631 882,623 900,610 913,606 927,598 940,596 948,598 960,608 988,631 1003,636 1017,639 1037,649 1058,657 1068,657 1083,651 1097,649 1120,648 1150,659 1187,681 1203,683 1220,682 1243,673 1277,670 1289,665';

const RED = '#ff3232';
const CYAN = '#54fcfc';

function barX(i) {
    return Math.round(24.33 + i * 4.347);
}

function rect(x, y, w, h, fill, stroke) {
    return `<rect x="${x}" y="${y}" width="${w}" height="${h}" fill="${fill}" stroke="${stroke || 'none'}"/>`;
}

function hline(y, color, dash, end) {
    return `<path d="M24 ${y + 0.5}H${end}" stroke="${color}" stroke-dasharray="${dash}"/>`;
}

function line(points, color) {
    return `<polyline points="${points}" fill="none" stroke="${color}" transform="translate(.5 .5)"/>`;
}

function drawPrice() {
    let out = '';
    for (let y = 165; y <= 453; y += 32) {
        out += hline(y, '#800000', '1 2', 1309);
    }
    out += rect(42.5, 300.5, 13, 190, '#001e50', '#ff0');
    out += rect(198.5, 358.5, 560, 41, '#001e50', '#ff0');
    out += rect(955.5, 175.5, 130, 49, '#001e50', '#ff0');

    CANDLES.trim().split(',').forEach((item, i) => {
        const candle = item.trim();
        const up = candle[0] === 'r';
        const [high, top, bottom, low] = candle.slice(1).split(' ').map(Number);
        const x = barX(i);
        const color = up ? RED : CYAN;
        if (up && bottom - top > 1) {
            out += rect(x, high, 1, top - high, color);
            out += rect(x, bottom, 1, low - bottom, color);
            out += rect(x - 0.5, top + 0.5, 2, bottom - top - 1, 'none', color);
        } else {
            out += rect(x, high, 1, Math.max(low - high, 1), color);
            out += rect(x - 1, top, 3, Math.max(bottom - top, 1), color);
        }
    });

    out += line(MA30, '#fff') + line(MA60, '#ff0') + line(ZIGZAG, '#ff0');
    // arrows to the lowest and highest price
    out += '<path d="M47 466.500h12M1087 149.500h11" stroke="#c0c0c0"/>';
    out += '<path d="M46 466.500l4-2v4zM1085 149.500l4-2v4z" fill="#c0c0c0"/>';
    document.getElementById('price-chart').innerHTML = out;
}

function drawRsi() {
    document.getElementById('rsi-chart').innerHTML =
        hline(502, '#800000', '1 2', 1309) +
        hline(537, '#800000', '1 2', 1309) +
        hline(573, '#800000', '1 2', 1309) +
        hline(522, '#00e5ff', '3 3', 1289) +
        hline(545, '#008040', '3 3', 1289) +
        hline(567, '#b00000', '3 3', 1289) +
        line(RSI, '#ff0');
}

function drawMacd() {
    let out = hline(591, '#800000', '1 2', 1309) + hline(628, '#800000', '1 2', 1309) + hline(666, '#800000', '1 2', 1309);
    MACD.forEach((value, i) => {
        out += value > 0
            ? rect(barX(i), 669 - value, 1, value, RED)
            : rect(barX(i), 670, 1, -value, '#00e600');
    });
    out += line(DIFF, '#fff') + line(DEA, '#ff0');
    document.getElementById('macd-chart').innerHTML = out;
}

drawPrice();
drawRsi();
drawMacd();
```
